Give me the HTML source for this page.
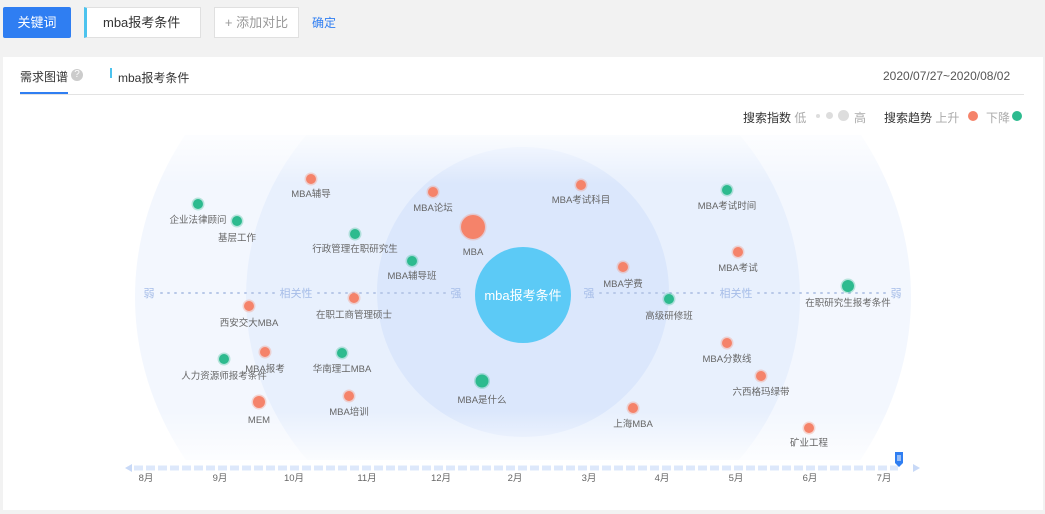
<!DOCTYPE html>
<html><head><meta charset="utf-8"><style>
html,body{margin:0;width:1045px;height:514px;overflow:hidden}
body{background:#f2f2f2;font-family:"Liberation Sans","Noto Sans CJK SC",sans-serif;position:relative}
.a{position:absolute}
.btn{position:absolute;top:7px;height:31px;box-sizing:border-box;font-size:13px;line-height:29px;text-align:center}
</style></head><body>
<div class="btn" style="left:3px;width:68px;background:#2f7ef2;color:#fff;border-radius:2px;line-height:31px">关键词</div>
<div class="btn" style="left:84px;width:117px;background:#fff;border:1px solid #e0e0e0;border-left:3px solid #4cc3ee;color:#333;text-align:left;padding-left:16px">mba报考条件</div>
<div class="btn" style="left:214px;width:85px;background:#fff;border:1px solid #e0e0e0;color:#999">+ 添加对比</div>
<div class="a" style="left:312px;top:14px;font-size:12px;color:#2f7ef2">确定</div>
<div class="a" style="left:3px;top:57px;width:1040px;height:453px;background:#fff"></div>
<div class="a" style="left:20px;top:68px;font-size:12px;color:#333">需求图谱</div>
<div class="a" style="left:71px;top:69px;width:12px;height:12px;border-radius:50%;background:#ccc;color:#fff;font-size:10px;line-height:12px;text-align:center">?</div>
<div class="a" style="left:20px;top:92px;width:48px;height:2px;background:#2f7ef2"></div>
<div class="a" style="left:20px;top:94px;width:1004px;height:1px;background:#e3e3e3"></div>
<div class="a" style="left:110px;top:68px;width:2px;height:10px;background:#4cc3ee"></div>
<div class="a" style="left:118px;top:69px;font-size:12px;color:#333">mba报考条件</div>
<div class="a" style="left:883px;top:69px;font-size:12px;color:#555">2020/07/27~2020/08/02</div>
<div class="a" style="left:743px;top:109px;font-size:12px;color:#333">搜索指数 <span style="color:#aaa">低</span></div>
<div class="a" style="left:816px;top:114px;width:4px;height:4px;border-radius:50%;background:#ddd"></div>
<div class="a" style="left:826px;top:112px;width:7px;height:7px;border-radius:50%;background:#ddd"></div>
<div class="a" style="left:838px;top:110px;width:11px;height:11px;border-radius:50%;background:#ddd"></div>
<div class="a" style="left:854px;top:109px;font-size:12px;color:#aaa">高</div>
<div class="a" style="left:884px;top:109px;font-size:12px;color:#333">搜索趋势 <span style="color:#aaa">上升</span></div>
<div class="a" style="left:968px;top:111px;width:10px;height:10px;border-radius:50%;background:#f5836a"></div>
<div class="a" style="left:986px;top:109px;font-size:12px;color:#aaa">下降</div>
<div class="a" style="left:1012px;top:111px;width:10px;height:10px;border-radius:50%;background:#2dbb8f"></div>
<svg class="a" style="left:0;top:0" width="1045" height="514" font-family="Liberation Sans,Noto Sans CJK SC,sans-serif">
<defs>
<clipPath id="c"><rect x="0" y="135" width="1045" height="325"/></clipPath>
<linearGradient id="f" x1="0" y1="0" x2="0" y2="1"><stop offset="0" stop-color="#fff" stop-opacity=".8"/><stop offset=".15" stop-color="#fff" stop-opacity="0"/><stop offset=".85" stop-color="#fff" stop-opacity="0"/><stop offset="1" stop-color="#fff" stop-opacity=".8"/></linearGradient>
</defs>
<g clip-path="url(#c)">
<ellipse cx="523" cy="297" rx="388" ry="330" fill="#f3f7fe"/>
<ellipse cx="523" cy="297" rx="277" ry="260" fill="#e8f0fd"/>
<ellipse cx="523" cy="292" rx="146" ry="145" fill="#dbe7fc"/>
</g>
<rect x="3" y="135" width="1040" height="325" fill="url(#f)"/>
<g stroke="#b8c8e8" stroke-width="2" stroke-dasharray="1 6" stroke-linecap="round">
<line x1="161" y1="293" x2="275" y2="293"/><line x1="318" y1="293" x2="447" y2="293"/>
<line x1="600" y1="293" x2="715" y2="293"/><line x1="758" y1="293" x2="886" y2="293"/>
</g>
<g font-size="11" fill="#a6bde8" text-anchor="middle">
<text x="149" y="297">弱</text><text x="296" y="297">相关性</text><text x="456" y="297">强</text>
<text x="589" y="297">强</text><text x="736" y="297">相关性</text><text x="896" y="297">弱</text>
</g>
<circle cx="523" cy="295" r="48" fill="#5ccaf6"/>
<text x="523" y="300" fill="#fff" font-size="13" text-anchor="middle">mba报考条件</text>
<g font-size="9.5" fill="#666" text-anchor="middle">
<g fill="#f5836a" stroke-width="3" stroke-opacity=".3">
<circle cx="311" cy="179" r="5" stroke="#f5836a"/><circle cx="433" cy="192" r="5" stroke="#f5836a"/>
<circle cx="473" cy="227" r="12" stroke="#f5836a"/><circle cx="249" cy="306" r="5" stroke="#f5836a"/>
<circle cx="354" cy="298" r="5" stroke="#f5836a"/><circle cx="265" cy="352" r="5" stroke="#f5836a"/>
<circle cx="259" cy="402" r="6" stroke="#f5836a"/><circle cx="349" cy="396" r="5" stroke="#f5836a"/>
<circle cx="581" cy="185" r="5" stroke="#f5836a"/><circle cx="738" cy="252" r="5" stroke="#f5836a"/>
<circle cx="623" cy="267" r="5" stroke="#f5836a"/><circle cx="727" cy="343" r="5" stroke="#f5836a"/>
<circle cx="761" cy="376" r="5" stroke="#f5836a"/><circle cx="633" cy="408" r="5" stroke="#f5836a"/>
<circle cx="809" cy="428" r="5" stroke="#f5836a"/>
</g>
<g fill="#2dbb8f" stroke="#2dbb8f" stroke-width="3" stroke-opacity=".3">
<circle cx="198" cy="204" r="5"/><circle cx="237" cy="221" r="5"/><circle cx="355" cy="234" r="5"/>
<circle cx="412" cy="261" r="5"/><circle cx="224" cy="359" r="5"/><circle cx="342" cy="353" r="5"/>
<circle cx="482" cy="381" r="6.5"/><circle cx="727" cy="190" r="5"/><circle cx="669" cy="299" r="5"/>
<circle cx="848" cy="286" r="6"/>
</g>
<text x="311" y="197">MBA辅导</text><text x="433" y="211">MBA论坛</text><text x="473" y="255">MBA</text>
<text x="198" y="223">企业法律顾问</text><text x="237" y="241">基层工作</text><text x="355" y="252">行政管理在职研究生</text>
<text x="412" y="279">MBA辅导班</text><text x="249" y="326">西安交大MBA</text><text x="354" y="318">在职工商管理硕士</text>
<text x="224" y="379">人力资源师报考条件</text><text x="265" y="372">MBA报考</text><text x="342" y="372">华南理工MBA</text>
<text x="259" y="423">MEM</text><text x="349" y="415">MBA培训</text><text x="482" y="403">MBA是什么</text>
<text x="581" y="203">MBA考试科目</text><text x="727" y="209">MBA考试时间</text><text x="738" y="271">MBA考试</text>
<text x="623" y="287">MBA学费</text><text x="669" y="319">高级研修班</text><text x="848" y="306">在职研究生报考条件</text>
<text x="727" y="362">MBA分数线</text><text x="761" y="395">六西格玛绿带</text><text x="633" y="427">上海MBA</text>
<text x="809" y="446">矿业工程</text>
</g>
<line x1="134" y1="468" x2="898" y2="468" stroke="#dde8fb" stroke-width="5" stroke-dasharray="9 3"/>
<path d="M125 468 l7 -4 v8z" fill="#c8d9f7"/><path d="M920 468 l-7 -4 v8z" fill="#c8d9f7"/>
<path d="M895 452 h8 v11 l-4 4 l-4 -4z" fill="#2f7ef2"/>
<line x1="898" y1="455" x2="898" y2="461" stroke="#fff"/><line x1="900" y1="455" x2="900" y2="461" stroke="#fff"/>
<g font-size="9.5" fill="#666" text-anchor="middle">
<text x="146" y="481">8月</text><text x="220" y="481">9月</text><text x="294" y="481">10月</text><text x="367" y="481">11月</text>
<text x="441" y="481">12月</text><text x="515" y="481">2月</text><text x="589" y="481">3月</text><text x="662" y="481">4月</text>
<text x="736" y="481">5月</text><text x="810" y="481">6月</text><text x="884" y="481">7月</text>
</g>
</svg>
</body></html>
